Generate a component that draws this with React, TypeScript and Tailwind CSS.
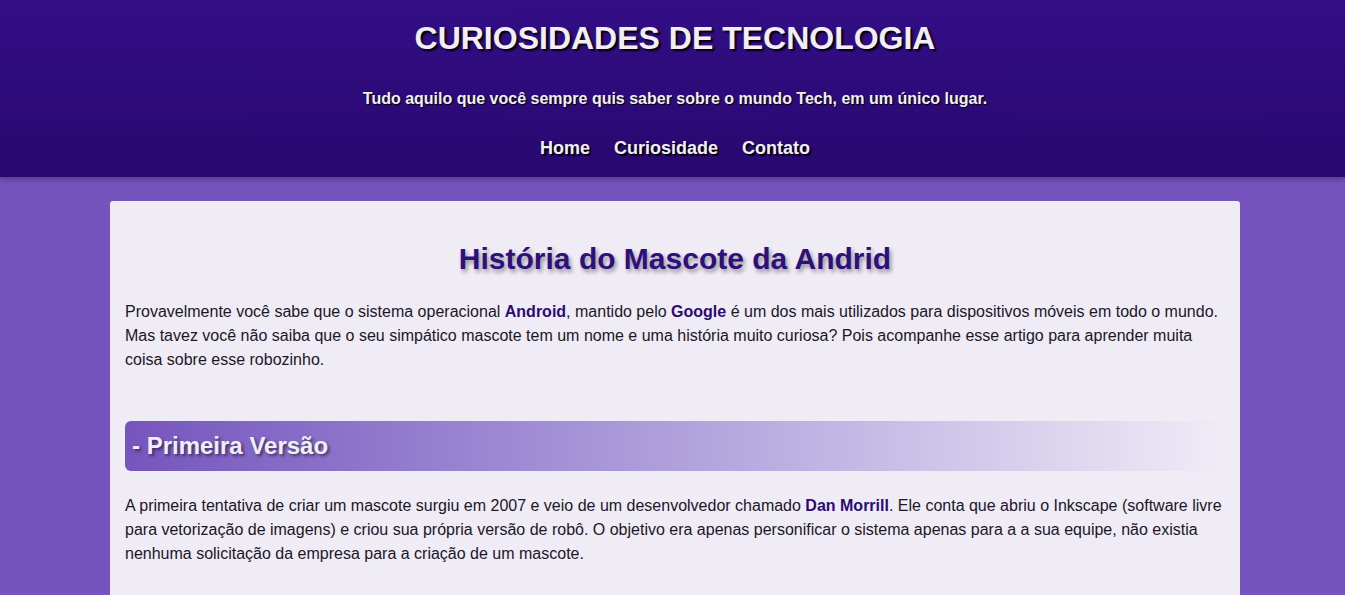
export default function App() {
  return (
    <div className="min-h-[595px] bg-[#7654bd] font-['Liberation_Sans',Arial,sans-serif]">
      <header className="bg-gradient-to-b from-[#330e86] to-[#29086f] pt-[20px] pb-[18px] pl-[5px] text-center text-[#f1eef8] shadow-[0_2px_6px_rgba(0,0,0,0.35)]">
        <h1 className="text-[32px] font-bold leading-[37px] [text-shadow:2px_2px_2px_#000]">
          CURIOSIDADES DE TECNOLOGIA
        </h1>
        <p className="mt-[33px] text-[16px] font-bold leading-[18px] [text-shadow:1px_1px_1px_#000]">
          Tudo aquilo que você sempre quis saber sobre o mundo Tech, em um único lugar.
        </p>
        <nav className="mt-[30px] flex justify-center gap-[24px] text-[18px] font-bold leading-[21px] [text-shadow:2px_2px_1px_#000]">
          <a href="#">Home</a>
          <a href="#">Curiosidade</a>
          <a href="#">Contato</a>
        </nav>
      </header>

      <main className="ml-[110px] mt-[24px] w-[1130px] rounded-t-[3px] bg-[#efecf6] px-[15px] pt-[40px] pb-[40px]">
        <h1 className="text-center text-[30px] font-bold leading-[35px] text-[#2f0f7c] [text-shadow:2px_3px_4px_rgba(0,0,0,0.4)]">
          História do Mascote da Andrid
        </h1>
        <p className="mt-[24px] text-[16px] leading-[24px] text-[#1c1626]">
          Provavelmente você sabe que o sistema operacional <strong className="text-[#2c0a72]">Android</strong>, mantido pelo{' '}
          <strong className="text-[#2c0a72]">Google</strong> é um dos mais utilizados para dispositivos móveis em todo o mundo.
          Mas tavez você não saiba que o seu simpático mascote tem um nome e uma história muito curiosa? Pois acompanhe esse
          artigo para aprender muita coisa sobre esse robozinho.
        </p>

        <h2 className="mt-[49px] flex h-[50px] items-center rounded-l-[6px] bg-gradient-to-r from-[#7654bd] to-[#efecf6] pl-[7px] text-[24px] font-bold text-[#f1eef8] [text-shadow:2px_2px_3px_rgba(0,0,0,0.5)]">
          - Primeira Versão
        </h2>
        <p className="mt-[23px] text-[16px] leading-[24px] text-[#1c1626]">
          A primeira tentativa de criar um mascote surgiu em 2007 e veio de um desenvolvedor chamado{' '}
          <strong className="text-[#2c0a72]">Dan Morrill</strong>. Ele conta que abriu o Inkscape (software livre para
          vetorização de imagens) e criou sua própria versão de robô. O objetivo era apenas personificar o sistema apenas
          para a a sua equipe, não existia nenhuma solicitação da empresa para a criação de um mascote.
        </p>
      </main>
    </div>
  );
}
